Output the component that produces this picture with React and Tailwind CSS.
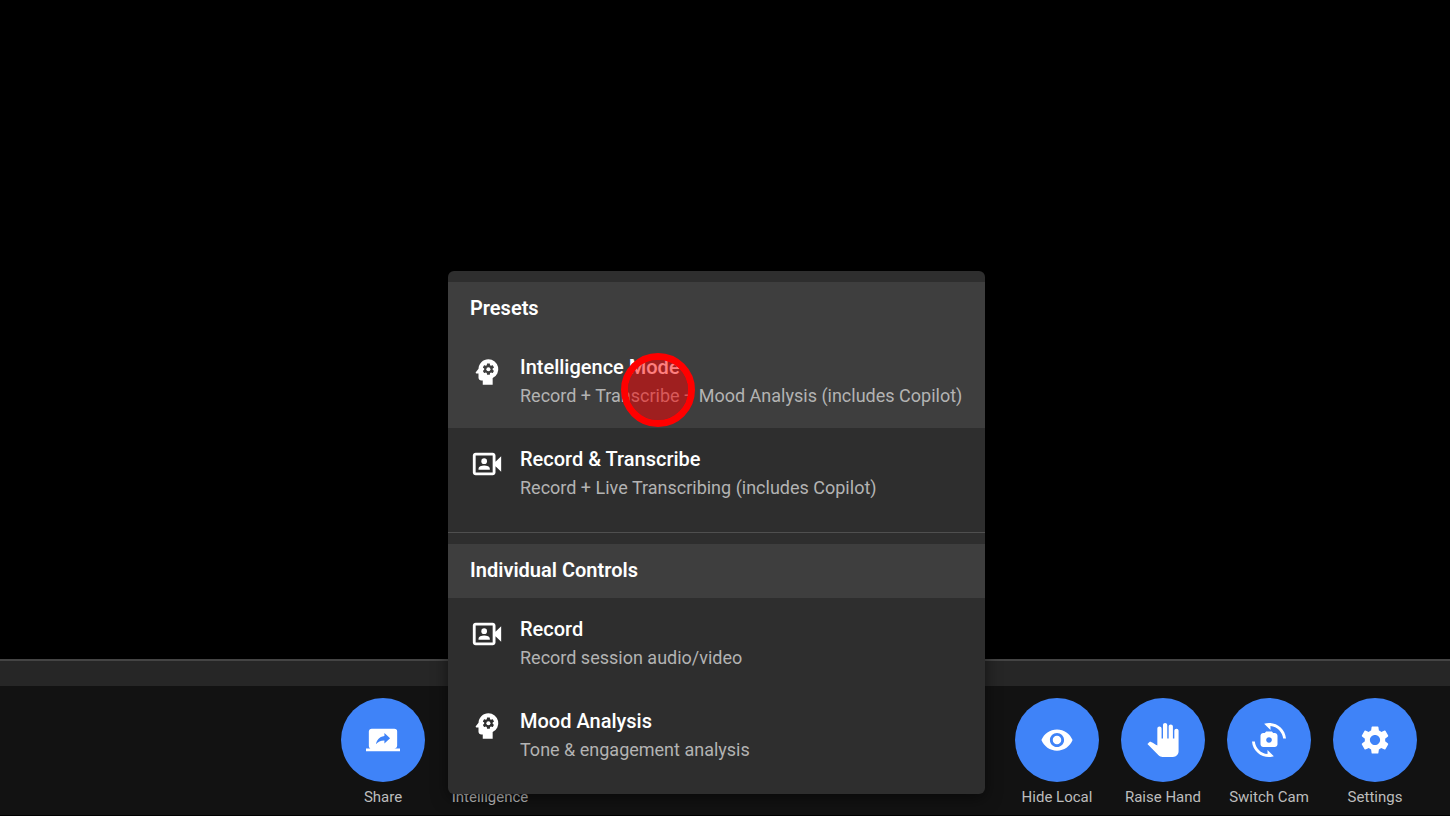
import React from "react";
import {
  MdCameraswitch,
  MdOutlineVideoCameraFront,
  MdPanTool,
  MdPsychology,
  MdScreenShare,
  MdSettings,
  MdVisibility,
} from "react-icons/md";

function ControlButton({ icon: Icon, label, ...props }) {
  return (
    <button type="button" className="flex w-[106px] flex-col items-center" {...props}>
      <span className="flex size-[84px] items-center justify-center rounded-full bg-[#3f83f8] text-white">
        <Icon size={34} aria-hidden="true" />
      </span>
      <span className="mt-[7px] text-[15px] leading-4 whitespace-nowrap text-[#bdbdbd]">{label}</span>
    </button>
  );
}

function MenuHeading({ children }) {
  return (
    <h2 className="bg-[#3e3e3e] px-[22px] pb-[2px] text-[20px] leading-[52px] font-semibold text-white">
      {children}
    </h2>
  );
}

function MenuItem({ icon: Icon, title, description, active, children }) {
  return (
    <button
      type="button"
      role="menuitem"
      className={`relative flex w-full items-start gap-4 px-[22px] py-[17px] text-left whitespace-nowrap ${
        active ? "bg-[#3e3e3e]" : "hover:bg-[#3e3e3e]"
      }`}
    >
      <Icon size={34} aria-hidden="true" className="mt-[2px] shrink-0 text-white" />
      <span className="flex flex-col">
        <span className="text-[20px] leading-7 font-medium text-white">{title}</span>
        <span className="text-[18px] leading-[30px] text-[#b3b3b3]">{description}</span>
      </span>
      {children}
    </button>
  );
}

function IntelligenceMenu() {
  return (
    <div
      role="menu"
      aria-label="Intelligence"
      className="absolute bottom-[11px] left-[11px] z-10 w-[537px] overflow-hidden rounded-md bg-[#2e2e2e] pt-[11px] pb-3 shadow-[0_4px_16px_rgba(0,0,0,0.5)]"
    >
      <MenuHeading>Presets</MenuHeading>
      <MenuItem
        icon={MdPsychology}
        title="Intelligence Mode"
        description="Record + Transcribe + Mood Analysis (includes Copilot)"
        active
      >
        <span className="pointer-events-none absolute top-[17px] left-[173px] size-[74px] rounded-full border-[7px] border-[#ff0000] bg-[#ff0000]/50 bg-clip-padding" />
      </MenuItem>
      <MenuItem
        icon={MdOutlineVideoCameraFront}
        title="Record & Transcribe"
        description="Record + Live Transcribing (includes Copilot)"
      />
      <hr className="mt-3 mb-[11px] border-t border-[#4f4f4f]" />
      <MenuHeading>Individual Controls</MenuHeading>
      <MenuItem icon={MdOutlineVideoCameraFront} title="Record" description="Record session audio/video" />
      <MenuItem icon={MdPsychology} title="Mood Analysis" description="Tone & engagement analysis" />
    </div>
  );
}

export default function App() {
  return (
    <div className="flex min-h-screen flex-col bg-black font-['Roboto',sans-serif]">
      <main className="flex-1" aria-label="Video" />
      <div className="h-[27px] border-t-2 border-[#444444] bg-[#262626]" />
      <footer className="flex justify-between border-b border-black bg-[#121212] pt-3 pr-[22px] pb-[10px] pl-[330px]">
        <div className="flex gap-px">
          <ControlButton icon={MdScreenShare} label="Share" />
          <div className="relative">
            <ControlButton icon={MdPsychology} label="Intelligence" aria-haspopup="menu" aria-expanded="true" />
            <IntelligenceMenu />
          </div>
        </div>
        <div className="flex">
          <ControlButton icon={MdVisibility} label="Hide Local" />
          <ControlButton icon={MdPanTool} label="Raise Hand" />
          <ControlButton icon={MdCameraswitch} label="Switch Cam" />
          <ControlButton icon={MdSettings} label="Settings" />
        </div>
      </footer>
    </div>
  );
}
